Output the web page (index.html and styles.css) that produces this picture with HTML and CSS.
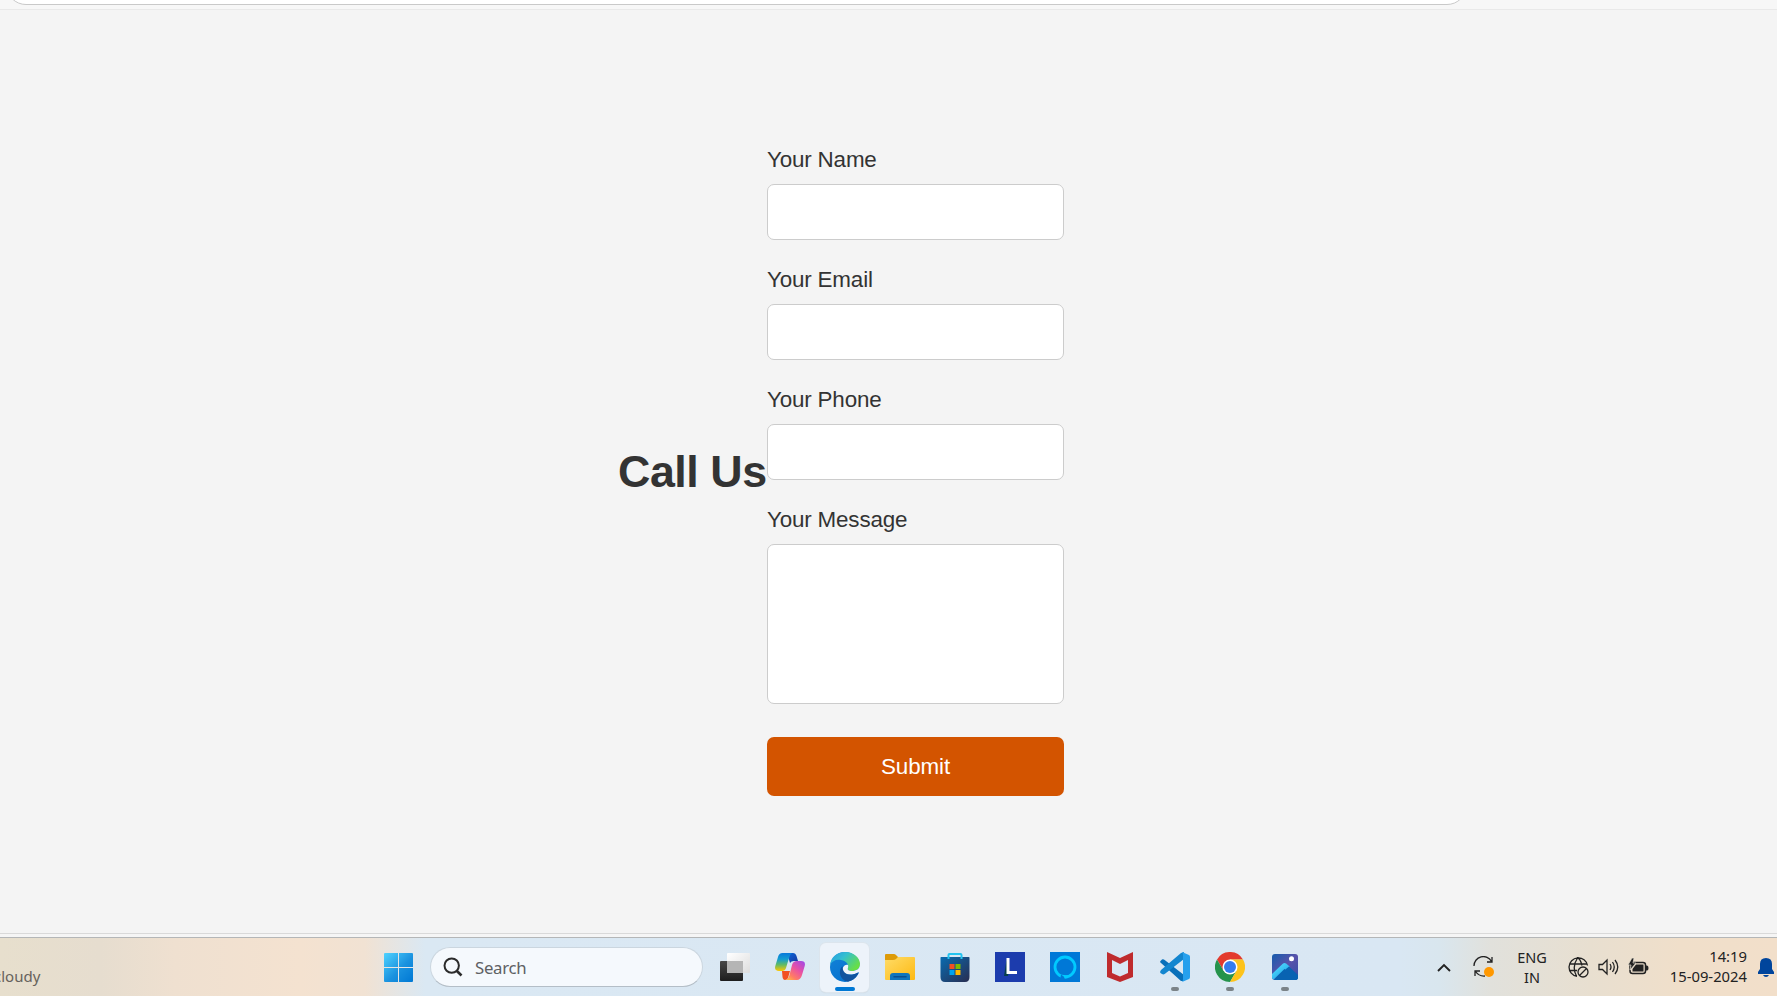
FILE: index.html
```html
<!DOCTYPE html>
<html lang="en">
<head>
<meta charset="utf-8">
<title>Call Us</title>
<link rel="stylesheet" href="styles.css">
</head>
<body>
<header class="browser-edge"><div class="address"></div></header>
<main class="page">
  <h1 class="title">Call Us</h1>
  <form class="form">
    <label class="label" for="name">Your Name</label>
    <input class="field" id="name" type="text">
    <label class="label" for="email">Your Email</label>
    <input class="field" id="email" type="email">
    <label class="label" for="phone">Your Phone</label>
    <input class="field" id="phone" type="tel">
    <label class="label" for="message">Your Message</label>
    <textarea class="field area" id="message"></textarea>
    <button class="submit" type="button">Submit</button>
  </form>
</main>
<div class="window-edge"></div>
<footer class="taskbar">
  <div class="weather"><span>cloudy</span></div>
  <div class="start">
    <svg width="29" height="29" viewBox="0 0 29 29"><defs><linearGradient id="win" x1="0" y1="0" x2="29" y2="29" gradientUnits="userSpaceOnUse"><stop offset="0" stop-color="#4fd3ff"/><stop offset=".55" stop-color="#1a92df"/><stop offset="1" stop-color="#0078d4"/></linearGradient></defs><path fill="url(#win)" d="M1 0H14V14H0V1Q0 0 1 0M15 0H28Q29 0 29 1V14H15ZM0 15H14V29H1Q0 29 0 28ZM15 15H29V28Q29 29 28 29H15Z"/></svg>
  </div>
  <div class="search">
    <svg width="20" height="20" viewBox="0 0 20 20" fill="none" stroke="#2b2b2b" stroke-width="2"><circle cx="8.7" cy="8.6" r="7.2"/><path stroke-width="2.6" d="M13.4 13.5 18.5 18.5"/></svg>
    <span class="search-text">Search</span>
  </div>
  <div class="apps">
    <div class="app">
      <svg width="30" height="30" viewBox="0 0 30 30"><defs><linearGradient id="tv" x2="0" y2="1"><stop stop-color="#484848"/><stop offset="1" stop-color="#1d1d1d"/></linearGradient><linearGradient id="tv2" x2="1" y2="1"><stop stop-color="#fff"/><stop offset="1" stop-color="#ddd"/></linearGradient></defs><rect y="9" width="23" height="20" rx="1" fill="url(#tv)"/><rect x="7" y="1" width="23" height="20" rx="1" fill="url(#tv2)"/><path fill="#b5b5b5" d="M7 9H23V21H8Q7 21 7 20Z"/></svg>
    </div>
    <div class="app">
      <svg width="30" height="30" viewBox="0 0 30 30"><defs><linearGradient id="cp1" x2="0" y2="1"><stop stop-color="#0879db"/><stop offset=".35" stop-color="#149ed0"/><stop offset=".65" stop-color="#61bb65"/><stop offset="1" stop-color="#ffc800"/></linearGradient><linearGradient id="cp2" x1="1" x2=".2" y2="1"><stop stop-color="#9b49eb"/><stop offset=".45" stop-color="#e850a5"/><stop offset=".8" stop-color="#ff7b65"/><stop offset="1" stop-color="#ffb347"/></linearGradient><linearGradient id="cp3" x2="1" y2="1"><stop stop-color="#0a68dc"/><stop offset="1" stop-color="#18369d"/></linearGradient></defs><path fill="url(#cp3)" d="M12 1H18Q20.500 1 21.500 4L23 9H19Q16 9 15 11Z"/><path fill="#f25022" d="M7 19H15L13 26Q12 28 10 28Q8 28 7.500 25Z"/><path fill="url(#cp1)" d="M7.500 1H17Q15 2 14 6L11 16Q10 19 7 19H4Q-1 19 .3 14L3 5Q4 1 7.500 1Z"/><path fill="url(#cp2)" d="M22 9H26Q31 9 29.700 14L27 23Q25.500 28 22 28H10Q13 28 14.500 23L17 13Q18 9 22 9Z"/></svg>
    </div>
    <div class="app active">
      <svg width="30" height="30" viewBox="0 0 30 30"><defs><linearGradient id="ed1" x2="1" y2=".6"><stop stop-color="#2697e5"/><stop offset=".45" stop-color="#33bfd0"/><stop offset="1" stop-color="#68df45"/></linearGradient><linearGradient id="ed2" x2=".6" y2="1"><stop stop-color="#1383d8"/><stop offset="1" stop-color="#0671ce"/></linearGradient></defs><circle cx="15" cy="15" r="15" fill="url(#ed2)"/><path fill="url(#ed1)" d="M0 13C1 5 7 0 15 0C24 0 30 6 30 12C30 17 26 19 22 19C19 19 17 18 18 16C19 13 17 9 11 8C6 7 2 9 0 13Z"/><path fill="#eef4fa" d="M18 13C17 12 13 13 12.500 17C12 21 17 23 22 22.500Q26 22 28 20.500L30 20V12C30 17 26 19 22 19C19 19 17 18 18 16Q18.500 14 18 13Z"/><path fill="#10539f" d="M12.500 14C8 18 9 28 18 29.700Q25 28 28 22Q28.500 20 27 21C20 25 12 22 12.500 14Z"/></svg>
    </div>
    <div class="app">
      <svg width="30" height="30" viewBox="0 0 30 30"><defs><linearGradient id="fo" x2="1" y2="1"><stop stop-color="#ffdc67"/><stop offset="1" stop-color="#fdb913"/></linearGradient></defs><path fill="#dd9b08" d="M1 2H9Q10 2 11 3L13 5H20V11H0V3Q0 2 1 2Z"/><path fill="url(#fo)" d="M0 8H8Q10 8 11 7L13 5H29Q30 5 30 6V27Q30 28 29 28H1Q0 28 0 27Z"/><path fill="#0f75bd" d="M5 28V24Q5 21 8 21H22Q25 21 25 24V28Z"/><path stroke="#084f91" stroke-width="1.500" stroke-linecap="round" d="M9 24.700H21"/></svg>
    </div>
    <div class="app">
      <svg width="30" height="30" viewBox="0 0 30 30"><defs><linearGradient id="st" x2="1" y2="1"><stop stop-color="#096bb0"/><stop offset="1" stop-color="#292d50"/></linearGradient></defs><path fill="url(#st)" d="M1 5H29Q29.500 5 29.500 6V25Q29.500 30 25 30H5Q.5 30 .5 25V6Q.5 5 1 5Z"/><path fill="none" stroke="#23c3ef" stroke-width="2" d="M8.500 7V3Q8.500 2 9.500 2H20.500Q21.500 2 21.500 3V7"/><path fill="#f25022" d="M9.500 12H14.500V17H9.500Z"/><path fill="#7fba00" d="M15.500 12H20.500V17H15.500Z"/><path fill="#00a4ef" d="M9.500 18H14.500V23H9.500Z"/><path fill="#ffb900" d="M15.500 18H20.500V23H15.500Z"/></svg>
    </div>
    <div class="app">
      <svg width="30" height="30" viewBox="0 0 30 30"><path fill="#1c3cad" d="M0 0H30V30H0Z"/><path fill="#053e4b" d="M11.500 8 9 24H13L14 19Z"/><path fill="none" stroke="#fff" stroke-width="3" d="M13 6V20.500H22"/></svg>
    </div>
    <div class="app">
      <svg width="30" height="30" viewBox="0 0 30 30"><path fill="#0078d7" d="M0 0H30V30H0Z"/><circle cx="15" cy="15" r="10" fill="none" stroke="#00caff" stroke-width="2.800"/><path fill="#0078d7" d="M11 22.500 15 25V28H10Z"/><path fill="#00caff" d="M10 22.500Q14 23 14.500 26.500L18 26V23.500Z"/></svg>
    </div>
    <div class="app">
      <svg width="30" height="30" viewBox="0 0 30 30"><path fill="#bf2b2d" fill-rule="evenodd" d="M2 0 15 6 28 0V25L15 30 2 25ZM7 8V21L15 24.500 23 21V8L15 12Z"/></svg>
    </div>
    <div class="app running">
      <svg width="30" height="30" viewBox="0 0 30 30"><path fill="#0870ba" d="M0 10Q0 9 2 7.500Q3.500 7 5 8.300L24 23V29L21 29 1 11Z"/><path fill="#1386cf" d="M0 20Q0 21 2 22Q3.500 23 5 21.700L24 7V0L21 1 1 18Z"/><path fill="#26a0ed" d="M22 0 29 3Q30 3.500 30 5V25Q30 26.500 29 27L22 30Q23 29 23 27V3Q23 1 22 0Z"/></svg>
    </div>
    <div class="app running">
      <svg width="30" height="30" viewBox="0 0 30 30"><path fill="#e33b2e" d="M2 7.500A15 15 0 0 1 28 7.500H15L8.500 18.700Z"/><path fill="#25934c" d="M2 7.500A15 15 0 0 0 15 30L21.500 18.700H8.500Z"/><path fill="#fdc31b" d="M28 7.500A15 15 0 0 1 15 30L21.500 18.700 15 7.500Z"/><circle cx="15" cy="15" r="7.500" fill="#fff"/><circle cx="15" cy="15" r="6" fill="#347ced"/></svg>
    </div>
    <div class="app running">
      <svg width="30" height="30" viewBox="0 0 30 30"><defs><linearGradient id="ph" x2="1" y2="1"><stop stop-color="#155cad"/><stop offset=".5" stop-color="#5852aa"/><stop offset="1" stop-color="#3650a8"/></linearGradient><linearGradient id="ph2" x2="1" y2="1"><stop stop-color="#5be4ff"/><stop offset="1" stop-color="#139ae5"/></linearGradient><clipPath id="phc"><rect x="2" y="2" width="26" height="26" rx="3"/></clipPath></defs><g clip-path="url(#phc)"><path fill="url(#ph)" d="M2 2H28V28H2Z"/><path fill="#0863b2" d="M15 14 30 26V29H3Z"/><path fill="none" stroke="url(#ph2)" stroke-width="5" stroke-linejoin="round" d="M0 27.500 14.500 13.500 18 16.500"/><path fill="#0863b2" d="M15.500 17.500 19 14.500 29 24V29H4Z"/><circle cx="21.500" cy="6.700" r="2.500" fill="#fff"/></g></svg>
    </div>
  </div>
  <div class="tray">
    <svg width="14" height="9" viewBox="0 0 14 9" fill="none" stroke="#222" stroke-width="1.900"><path d="M1 8 7 2 13 8"/></svg>
    <svg class="sync" width="22" height="22" viewBox="0 0 22 22" fill="none" stroke="#222" stroke-width="1.300"><path d="M1 10A9.300 9.300 0 0 1 18.500 5.500M19 1V6H14M2 20V15H7M2.500 15.500Q6 20.500 12 20"/><circle cx="16" cy="16" r="5" fill="#ff9800" stroke="none"/></svg>
    <div class="lang"><span>ENG</span><span>IN</span></div>
    <div class="status">
      <svg width="21" height="21" viewBox="0 0 21 21" fill="none" stroke="#222" stroke-width="1.300"><path d="M9 19.400A9.300 9.300 0 1 1 19.500 8.500M1.500 7H19M1.500 13.500H9M8.500 19Q3.500 10 9.500 1Q12 1 14 8.500"/><circle cx="15" cy="15" r="5"/><path d="M11.500 18.500 18.500 11.500"/></svg>
      <svg width="21" height="18" viewBox="0 0 21 18" fill="none" stroke="#222" stroke-width="1.300"><path d="M1 6.500H4.500L9 2V16L4.500 11.500H1ZM12 6Q14 9 12 12M14.500 4Q18 9 14.500 14M17 2Q22.500 9 17 16"/></svg>
      <svg width="21" height="18" viewBox="0 0 21 18"><rect x="2" y="4.500" width="15.500" height="11" rx="2.500" fill="none" stroke="#222" stroke-width="1.500"/><path fill="#222" d="M18 7.500H19Q20.500 7.500 20.500 10T19 12.500H18ZM8 6.500H15.500V13.500H4.500V11Z"/><path fill="#222" stroke="#e5dfd3" stroke-width=".7" d="M4 0 0 7H3L2 12 8 5H5L6 0Z"/></svg>
    </div>
    <div class="clock"><span>14:19</span><span>15-09-2024</span></div>
    <svg class="bell" width="16" height="19" viewBox="0 0 16 19" fill="#00459c"><path d="M8 0Q14 0 14 6V11L16 14V16H0V14L2 11V6Q2 0 8 0ZM5 17H11Q10 19 8 19T5 17Z"/></svg>
  </div>
</footer>
</body>
</html>
```
FILE: styles.css
```css
* { box-sizing: border-box; }
body {
  margin: 0;
  height: 996px;
  display: flex;
  flex-direction: column;
  overflow: hidden;
  background: #f4f4f4;
  color: #333;
  font-family: "Liberation Sans", Arial, sans-serif;
}
.browser-edge {
  height: 10px;
  flex: none;
  padding-left: 6px;
  background: #f7f7f7;
  border-bottom: 1px solid #e9e9e9;
  overflow: hidden;
}
.address {
  width: 1461px;
  height: 40px;
  margin-top: -35px;
  background: #fff;
  border: 1px solid #c9c9c9;
  border-radius: 20px;
}
.page {
  flex: 1;
  display: flex;
  align-items: flex-start;
  padding: 137px 0 0 618px;
}
.title {
  width: 149px;
  margin: 298px 0 0;
  font-size: 44.8px;
  line-height: 52px;
  letter-spacing: -.45px;
  white-space: nowrap;
}
.form {
  display: flex;
  flex-direction: column;
  width: 297px;
}
.label {
  font-size: 22.4px;
  line-height: 26px;
  letter-spacing: -.17px;
  margin-bottom: 11px;
}
.field {
  width: 100%;
  height: 56px;
  margin: 0 0 27px;
  padding: 14px;
  border: 1px solid #ccc;
  border-radius: 7px;
  background: #fff;
  font: inherit;
  outline: none;
}
.area {
  height: 160px;
  margin-bottom: 33px;
  resize: none;
}
.submit {
  height: 59px;
  padding: 0;
  border: 0;
  border-radius: 7px;
  background: #d35400;
  color: #fff;
  font: 22.4px "Liberation Sans", Arial, sans-serif;
  letter-spacing: -.1px;
}
.window-edge {
  flex: none;
  height: 5px;
  background: #f5f5f5;
  border-top: 1px solid #d9d9d9;
  border-bottom: 1px solid #b4b6b7;
}
.taskbar {
  flex: none;
  height: 58px;
  display: flex;
  align-items: center;
  background: linear-gradient(90deg, #e7dfcd 0, #e6ddcf 100px, #efe0d0 175px, #f4e2d0 300px, #f1e2d3 365px, #dae8f3 425px, #d9e7f3 1400px, #d9e6ee 1440px, #e1e1dc 1490px, #e8dfd0 1590px, #f0dfca 1680px, #f2dfca 1777px);
  font-family: "Noto Sans", sans-serif;
}
.weather {
  width: 371px;
  height: 58px;
  display: flex;
  overflow: hidden;
  color: #66625c;
  font-size: 15px;
  line-height: 20px;
}
.weather span {
  margin: 28px 0 0 -6px;
  white-space: nowrap;
}
.start {
  width: 59px;
  display: flex;
  padding: 0 0 0 13px;
}
.search {
  width: 273px;
  height: 40px;
  display: flex;
  align-items: center;
  padding-left: 12px;
  gap: 12px;
  border: 1px solid #cbd6df;
  border-bottom-color: #b4bec7;
  border-radius: 20px;
  background: #f5f9fd;
}
.search-text {
  font-size: 16.8px;
  letter-spacing: -.3px;
  color: #5e6164;
}
.apps {
  display: flex;
  padding-left: 4px;
}
.app {
  width: 49px;
  height: 49px;
  margin: 0 3px;
  display: grid;
  place-items: center;
  position: relative;
  border-radius: 6px;
}
.app svg { display: block; }
.active {
  background: #edf3fa;
  box-shadow: 0 0 0 1px #dce5ed, 0 1px 1px #bdc9d3;
}
.active::after, .running::after {
  content: "";
  position: absolute;
  bottom: 1px;
  left: 15px;
  width: 20px;
  height: 4px;
  border-radius: 2px;
  background: #0078d4;
}
.running::after {
  left: 21px;
  width: 8px;
  background: #7b8388;
}
.tray {
  flex: 1;
  display: flex;
  align-items: center;
  justify-content: flex-end;
  padding-right: 3px;
  color: #222;
}
.sync { margin-left: 22px; }
.lang, .clock {
  display: flex;
  flex-direction: column;
  font-size: 14.5px;
  line-height: 20px;
}
.lang {
  width: 40px;
  margin-left: 17px;
  align-items: center;
}
.status {
  display: flex;
  align-items: center;
  gap: 9px;
  margin-left: 16px;
}
.clock {
  width: 80px;
  margin: -2px 0 0 18px;
  align-items: flex-end;
  font-size: 14.8px;
  white-space: nowrap;
}
.bell { margin-left: 11px; }
```
